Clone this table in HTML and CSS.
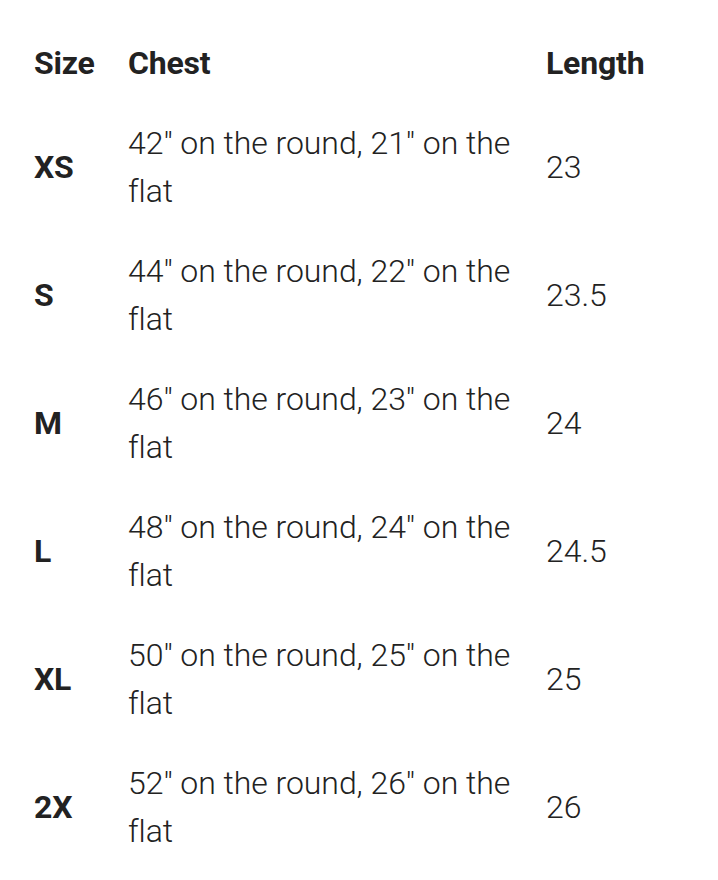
FILE: index.html
```html
<!DOCTYPE html>
<html>
<head>
<meta charset="utf-8">
<link rel="stylesheet" href="styles.css">
</head>
<body>
<table class="size-table">
  <colgroup>
    <col class="c-size">
    <col class="c-chest">
    <col class="c-length">
  </colgroup>
  <thead>
    <tr><th>Size</th><th>Chest</th><th>Length</th></tr>
  </thead>
  <tbody>
    <tr><th>XS</th><td>42" on the round, 21" on the flat</td><td>23</td></tr>
    <tr><th>S</th><td>44" on the round, 22" on the flat</td><td>23.5</td></tr>
    <tr><th>M</th><td>46" on the round, 23" on the flat</td><td>24</td></tr>
    <tr><th>L</th><td>48" on the round, 24" on the flat</td><td>24.5</td></tr>
    <tr><th>XL</th><td>50" on the round, 25" on the flat</td><td>25</td></tr>
    <tr><th>2X</th><td>52" on the round, 26" on the flat</td><td>26</td></tr>
  </tbody>
</table>
</body>
</html>
```
FILE: styles.css
```css
html, body {
  margin: 0;
  padding: 0;
  background: #fff;
}
body {
  padding: 23px 18px 0 18px;
  font-family: Roboto, "Liberation Sans", sans-serif;
  color: #222;
}
.size-table {
  border-collapse: collapse;
  table-layout: fixed;
  width: 682px;
}
.c-size { width: 94px; }
.c-chest { width: 418px; }
.c-length { width: 170px; }
.size-table th,
.size-table td {
  padding: 16px;
  font-size: 32px;
  line-height: 48px;
  text-align: left;
  vertical-align: middle;
}
.size-table th {
  font-weight: 700;
  letter-spacing: -0.2px;
}
.size-table td {
  font-weight: 300;
  letter-spacing: -0.05px;
}
```
